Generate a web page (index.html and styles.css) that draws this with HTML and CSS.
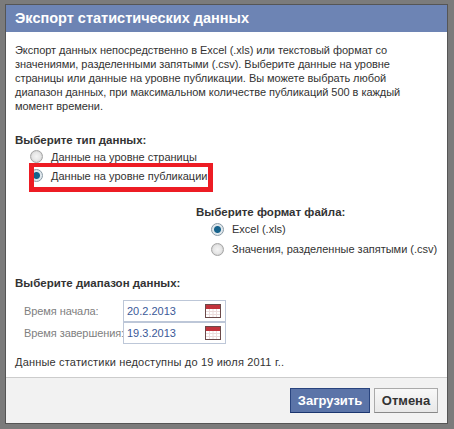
FILE: index.html
```html
<!DOCTYPE html>
<html>
	<head>
        <meta http-equiv="Content-Type" content="text/html; charset=utf-8">
        <title>Экспорт статистических данных</title>
        <link rel="stylesheet" href="styles.css">
    </head>
    <body>
        <div class="dialog">
            <h1 class="dialogTitle">Экспорт статистических данных</h1>
            <div class="dialogBody">
                <p class="intro">Экспорт данных непосредственно в Excel (.xls) или текстовый формат со<br>значениями, разделенными запятыми (.csv). Выберите данные на уровне<br>страницы или данные на уровне публикации. Вы можете выбрать любой<br>диапазон данных, при максимальном количестве публикаций 500 в каждый<br>момент времени.</p>
                <h2 class="groupTitle typeTitle">Выберите тип данных:</h2>
                <div class="radioList">
                    <div class="radioRow"><span class="radio"></span>Данные на уровне страницы</div>
                    <div class="radioRow"><span class="radio checked"></span>Данные на уровне публикации</div>
                </div>
                <div class="formatGroup">
                    <h2 class="groupTitle">Выберите формат файла:</h2>
                    <div class="radioList">
                        <div class="radioRow tall"><span class="radio checked"></span>Excel (.xls)</div>
                        <div class="radioRow tall"><span class="radio"></span>Значения, разделенные запятыми (.csv)</div>
                    </div>
                </div>
                <h2 class="groupTitle rangeTitle">Выберите диапазон данных:</h2>
                <div class="dateRows">
                    <div class="dateRow">
                        <span class="dateLabel">Время начала:</span>
                        <div class="dateInput">20.2.2013
                            <svg class="calendar" width="16" height="14" viewBox="0 0 16 14"><rect x="0.5" y="0.5" width="15" height="13" fill="#fff" stroke="#6b4a4a"/><rect x="1" y="1" width="14" height="4" fill="#c2333c"/><path d="M1 7.500h14M1 10.500h14M4.500 5v8M8 5v8M11.500 5v8" stroke="#ecdcdc" fill="none"/></svg>
                        </div>
                    </div>
                    <div class="dateRow">
                        <span class="dateLabel">Время завершения:</span>
                        <div class="dateInput">19.3.2013
                            <svg class="calendar" width="16" height="14" viewBox="0 0 16 14"><rect x="0.5" y="0.5" width="15" height="13" fill="#fff" stroke="#6b4a4a"/><rect x="1" y="1" width="14" height="4" fill="#c2333c"/><path d="M1 7.500h14M1 10.500h14M4.500 5v8M8 5v8M11.500 5v8" stroke="#ecdcdc" fill="none"/></svg>
                        </div>
                    </div>
                </div>
                <p class="note">Данные статистики недоступны до 19 июля 2011 г..</p>
            </div>
            <div class="dialogFooter">
                <button class="btn btnPrimary">Загрузить</button>
                <button class="btn btnCancel">Отмена</button>
            </div>
        </div>
        <div class="redMark"></div>
    </body>
</html>
```

FILE: styles.css
```css
html, body{
    margin: 0;
    height: 100%;
}
body{
    position: relative;
    background: #7b7b7b;
    padding: 4px 5px 5px 5px;
    box-sizing: border-box;
    font-family: "Liberation Sans", Arial, sans-serif;
    font-size: 11px;
    color: #333;
}
.dialog{
    width: 443px;
    height: 420px;
    background: #fff;
    border: 1px solid #555;
    box-sizing: border-box;
    display: flex;
    flex-direction: column;
}
.dialogTitle{
    margin: 0;
    height: 27px;
    line-height: 27px;
    padding-left: 9px;
    background: #6d84b4;
    color: #fff;
    font-size: 14.5px;
    font-weight: bold;
}
.dialogBody{
    flex: 1;
    padding: 11px 9px 0 9px;
}
.intro{
    margin: 0;
    line-height: 14px;
    letter-spacing: -0.04px;
}
.groupTitle{
    margin: 0;
    font-size: 11.5px;
    line-height: 14px;
    font-weight: bold;
    color: #333;
}
.typeTitle{
    margin-top: 20px;
}
.radioList{
    padding-left: 15px;
}
.radioRow{
    display: flex;
    align-items: center;
    height: 19px;
    white-space: nowrap;
}
.radioRow.tall{
    height: 20px;
}
.radio{
    flex-shrink: 0;
    width: 11px;
    height: 11px;
    margin-right: 8px;
    border-radius: 50%;
    border: 1px solid #a5a5a5;
    background: radial-gradient(circle, #f4f4f4 0, #e6e6e6 4px, #cfcfcf 6px);
}
.radio.checked{
    background: radial-gradient(circle, #17638c 0, #17638c 3px, #dfe7ec 4px);
    border-color: #8a9aa5;
}
.formatGroup{
    margin: 20px 0 0 181px;
}
.rangeTitle{
    margin-top: 17px;
}
.dateRows{
    margin-top: 10px;
    padding-left: 9px;
}
.dateRow{
    display: flex;
    align-items: center;
}
.dateLabel{
    width: 99px;
    color: #808080;
    white-space: nowrap;
    letter-spacing: -0.08px;
}
.dateInput{
    width: 103px;
    height: 22px;
    display: flex;
    align-items: center;
    justify-content: space-between;
    padding: 0 4px 0 3px;
    box-sizing: border-box;
    border: 1px solid #bdc7d8;
    color: #3b5998;
    font-size: 11px;
}
.calendar{
    display: block;
}
.note{
    margin: 11px 0 0 0;
    line-height: 14px;
    letter-spacing: 0.18px;
}
.dialogFooter{
    height: 45px;
    background: #f2f2f2;
    border-top: 1px solid #ccc;
    display: flex;
    justify-content: flex-end;
    align-items: center;
    gap: 4px;
    padding-right: 9px;
}
.btn{
    height: 25px;
    padding: 0;
    border: 1px solid #aaa;
    border-bottom-color: #888;
    font-family: "Liberation Sans", Arial, sans-serif;
    font-size: 13px;
    font-weight: bold;
}
.btnPrimary{
    width: 80px;
    background: #5b74a8;
    border-color: #29447e #29447e #1a356e;
    color: #fff;
}
.btnCancel{
    width: 64px;
    background: linear-gradient(#f8f8f8, #e8e8e8);
    color: #333;
}
.redMark{
    position: absolute;
    left: 29px;
    top: 163px;
    width: 184px;
    height: 29px;
    box-sizing: border-box;
    border: 5px solid #ed1c24;
    border-top-width: 4px;
}
```
